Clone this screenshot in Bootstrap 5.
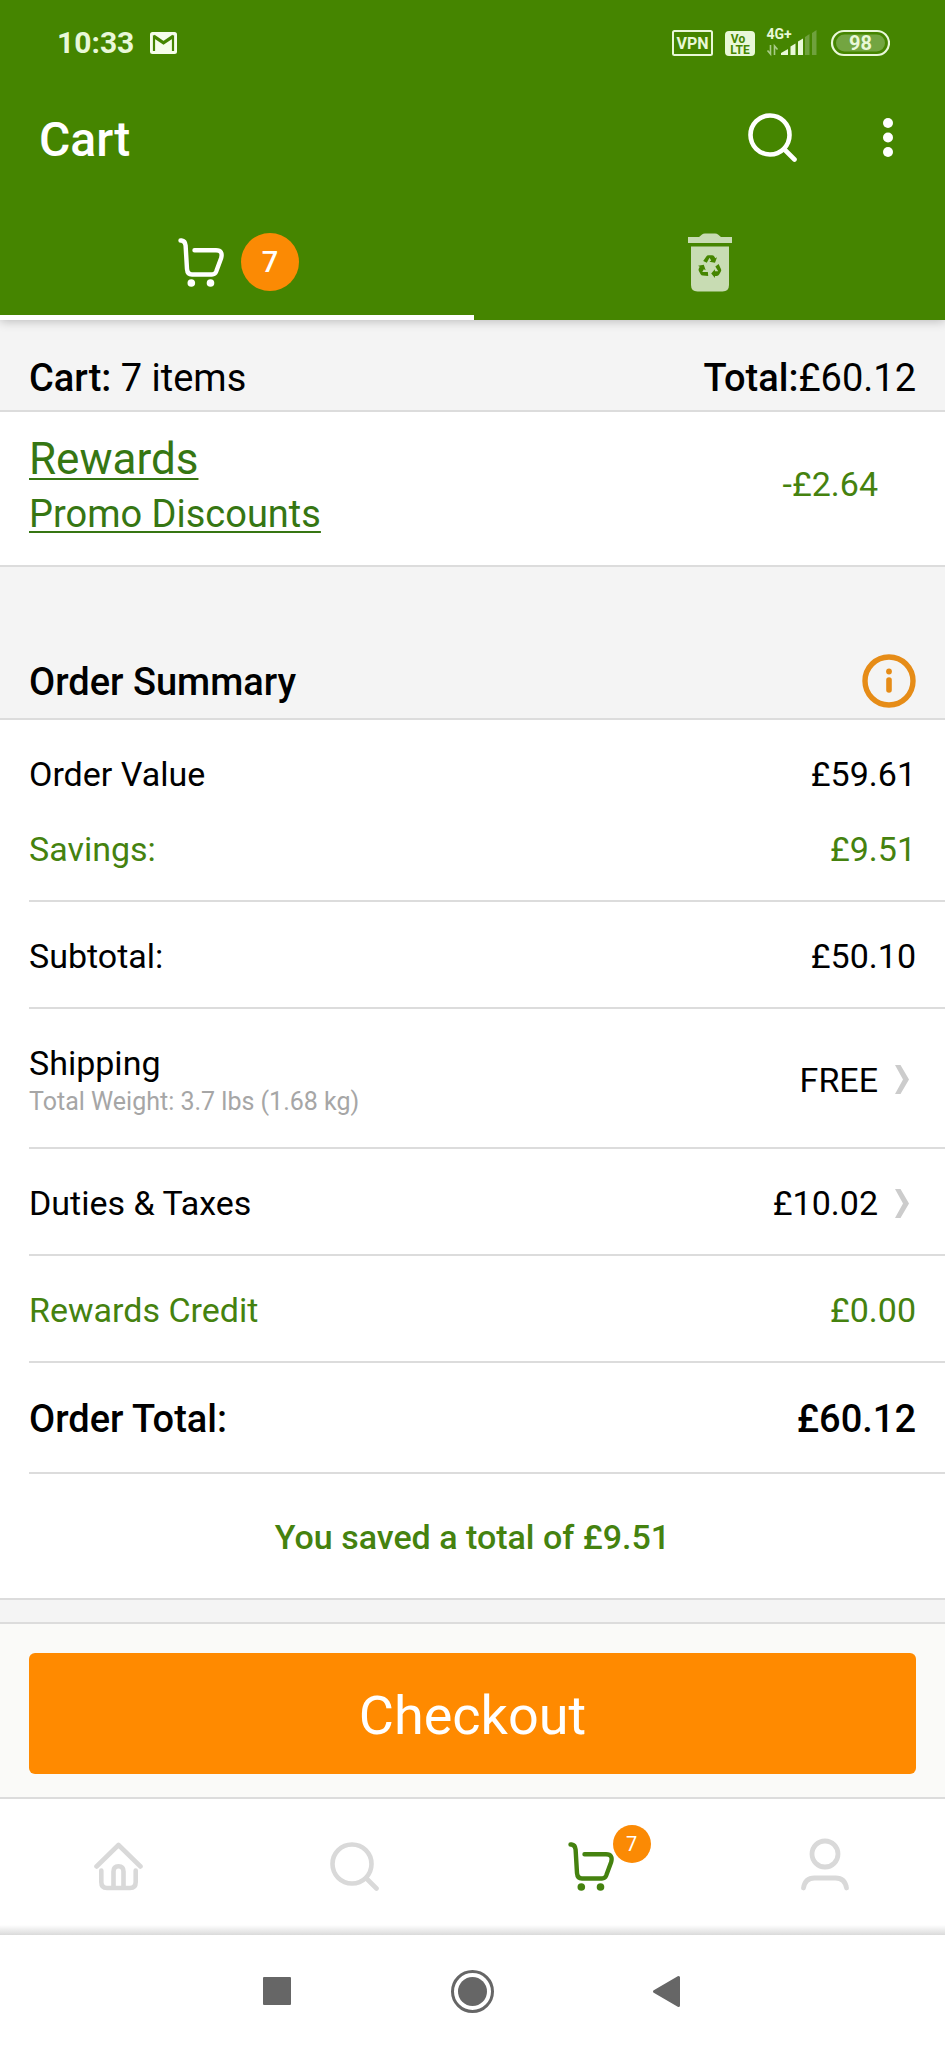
<!DOCTYPE html>
<html lang="en">
<head>
<meta charset="utf-8">
<meta name="viewport" content="width=device-width, initial-scale=1">
<title>Cart</title>
<link href="https://cdn.jsdelivr.net/npm/bootstrap@5.3.0/dist/css/bootstrap.min.css" rel="stylesheet">
<style>
  :root { --leaf: #458500; --leaf-text: #45820f; --leaf-link: #367613; --amber: #ff8a00; --band: #f4f4f4; --rule: #dcdcdc; --edge: 29px; }
  body { font-family: Roboto, "Liberation Sans", sans-serif; font-size: 34px; line-height: 44px; color: #000; background: #fff; }
  svg { display: block; flex: none; }
  button.bare { border: 0; background: none; padding: 0; color: inherit; }
  .edge-x { padding-left: var(--edge); padding-right: var(--edge); }
  .t-lg { font-size: 38px; }
  .t-mid { font-weight: 500; }
  .summary .t-green, .t-green { color: var(--leaf-text); }

  .app-head { background: var(--leaf); color: #fff; position: relative; box-shadow: 0 1px 10px rgba(0,0,0,.25); z-index: 1; }
  .status { height: 86px; padding: 0 55px 0 57px; color: #e9f8d8; font-size: 30px; line-height: 36px; }
  .title-bar { height: 102px; padding: 0 37px 0 39px; }
  .title-bar h1 { font-size: 48px; line-height: 56px; padding-top: 6px; }
  .title-bar .actions { gap: 71px; }
  .more { width: 40px; }
  .cart-tabs { height: 132px; }
  .cart-tabs a { color: #fff; border-bottom: 5px solid transparent; padding-top: 21px; }
  .cart-tabs a.active { border-color: #fff; padding-left: 3px; }
  .count { background: #fb8a04; color: #fff; border-radius: 50%; }
  .count-lg { width: 58px; height: 58px; font-size: 29px; font-weight: 500; margin-left: 17px; }
  .count-sm { width: 38px; height: 38px; font-size: 20px; left: 45px; top: -17px; }

  .band { background: var(--band); border-bottom: 2px solid var(--rule); }
  .band-cart { padding-top: 36px; padding-bottom: 10px; }
  .band-summary { padding-top: 87px; padding-bottom: 10px; }
  .band-summary h2 { padding-top: 4px; }
  .rewards { padding-top: 22px; padding-bottom: 26px; border-bottom: 2px solid var(--rule); }
  .rewards a { color: var(--leaf-link); line-height: 50px; text-underline-offset: 4px; text-decoration-thickness: 2px; }
  .rewards a.first { font-size: 44px; margin-bottom: 5px; }
  .rewards .amount { padding-right: 38px; padding-bottom: 6px; }

  .summary { margin-left: var(--edge); }
  .line-item { padding: 32px var(--edge) 29px 0; border-bottom: 2px solid var(--rule); color: #000; }
  .line-pair { gap: 31px; }
  .line-total { line-height: 48px; }
  .weight { font-size: 25px; line-height: 33px; color: #a6a6a6; }
  .chev { margin-left: 17px; margin-right: 7px; }
  .saved { padding: 41px 0 39px; border-bottom: 2px solid var(--rule); }
  .strip { height: 24px; }
  .pay { background: #fafaf8; padding-top: 29px; padding-bottom: 23px; border-bottom: 2px solid var(--rule); }
  .pay .btn { --bs-btn-bg: var(--amber); --bs-btn-color: #fff; --bs-btn-border-width: 0; --bs-btn-hover-bg: #f58400; --bs-btn-hover-color: #fff;
    height: 121px; font-size: 54px; line-height: 64px; border-radius: 6px; padding: 10px 0 6px; }
  .tab-bar { height: 136px; padding-bottom: 2px; background: linear-gradient(to top, #dadada, #fff 10px); color: #d9d9d9; }
  .tab-bar a { color: inherit; }
  .tab-bar a.active { color: var(--leaf-text); }
  .sys-bar { height: 113px; gap: 152px; color: #666; }
</style>
</head>
<body>
<svg class="d-none" aria-hidden="true">
  <symbol id="i-cart" viewBox="0 0 46 49">
    <path d="M2.500 2.500H3.500Q7.200 3 7.600 7.500L9 31Q9.400 36.500 14 36.500H34Q37 36.500 38.200 33.500L43 20.500Q45.500 12.300 38 12.200H16.500" fill="none" stroke="currentColor" stroke-width="4.400" stroke-linecap="round" stroke-linejoin="round"/>
    <circle cx="13.300" cy="45" r="3.800" fill="currentColor"/><circle cx="32.500" cy="45" r="3.800" fill="currentColor"/>
  </symbol>
  <symbol id="i-search" viewBox="0 0 49 49">
    <circle cx="22" cy="22" r="19.500" fill="none" stroke="currentColor" stroke-width="4.600"/>
    <path d="M36.500 36.500L46.500 46.500" stroke="currentColor" stroke-width="4.600" stroke-linecap="round"/>
  </symbol>
  <symbol id="i-chev" viewBox="0 0 14 29">
    <path d="M0 0H5.500L14 14.500L5.500 29H0L8 14.500Z" fill="#ccc"/>
  </symbol>
</svg>

<div class="d-flex flex-column min-vh-100">
  <header class="app-head">
    <div class="status d-flex align-items-center justify-content-between">
      <div class="d-flex align-items-center gap-3">
        <span class="fw-bold">10:33</span>
        <svg width="27" height="22" viewBox="0 0 27 22" aria-label="Mail">
          <rect width="27" height="22" rx="2.500" fill="#f6fdeb"/>
          <path d="M4 19V5L13.500 11.500L23 5V19" fill="none" stroke="#458500" stroke-width="2.200"/>
          <path d="M4 3.500L13.500 10L23 3.500" fill="none" stroke="#458500" stroke-width="2"/>
        </svg>
      </div>
      <svg width="218" height="46" viewBox="671 20 218 46" font-family="Roboto, sans-serif" font-weight="700">
        <rect x="672" y="31" width="39" height="24" rx="1.500" fill="none" stroke="#e9f8d8" stroke-width="2"/>
        <text x="691.500" y="48.500" font-size="16" text-anchor="middle" fill="#e9f8d8">VPN</text>
        <rect x="724" y="31" width="30" height="25" rx="4" fill="#e9f8d8"/>
        <text x="737" y="42.500" font-size="12" text-anchor="middle" fill="#458500">Vo</text>
        <text x="739" y="53.500" font-size="12" text-anchor="middle" fill="#458500">LTE</text>
        <text x="765.500" y="38.500" font-size="14" fill="#e9f8d8">4G+</text>
        <path d="M769.500 45V54L766.500 50.500M773.500 55V46L776.500 49.500" fill="none" stroke="#a9cc88" stroke-width="1.600"/>
        <path d="M780 55V53L787 49V55ZM789.500 55V46.500L794.500 43.500V55ZM797 55V41.500L802 38.500V55Z" fill="#e9f8d8"/>
        <path d="M804 55V37L808.500 34V55ZM811 55V33L815.500 30V55Z" fill="#6fa13d"/>
        <rect x="831" y="31" width="57" height="24" rx="12" fill="none" stroke="#e9f8d8" stroke-width="2.200"/>
        <rect x="835" y="34.500" width="49" height="17" rx="8.500" fill="#73a541"/>
        <text x="859.500" y="50" font-size="20" text-anchor="middle" fill="#e9f8d8">98</text>
      </svg>
    </div>
    <div class="title-bar d-flex align-items-center justify-content-between">
      <h1 class="t-mid m-0">Cart</h1>
      <div class="actions d-flex align-items-center">
        <button class="bare" type="button" aria-label="Search"><svg width="49" height="49"><use href="#i-search"/></svg></button>
        <button class="bare more d-flex justify-content-center" type="button" aria-label="More options">
          <svg width="10" height="39" viewBox="0 0 10 39" fill="#fff"><circle cx="5" cy="5" r="5"/><circle cx="5" cy="19.500" r="5"/><circle cx="5" cy="34" r="5"/></svg>
        </button>
      </div>
    </div>
    <nav class="cart-tabs row g-0" aria-label="Cart lists">
      <a class="col active d-flex align-items-center justify-content-center text-decoration-none" href="#cart" aria-label="Cart">
        <svg width="46" height="49"><use href="#i-cart"/></svg>
        <span class="count count-lg d-flex align-items-center justify-content-center">7</span>
      </a>
      <a class="col d-flex align-items-center justify-content-center" href="#removed" aria-label="Removed items">
        <svg width="44" height="59" viewBox="0 0 44 59">
          <path d="M0 4H11L14 1.500Q15 .5 17 .5H27Q29 .5 30 1.500L33 4H44V10H0ZM3 13.500H41V52Q41 58.500 34.500 58.500H9.500Q3 58.500 3 52Z" fill="#c8dcb3"/>
          <g fill="#458500"><path id="r-arm" d="M15.200 28L18.300 23.500Q19 22.300 20.500 22.300H24Q25.500 22.300 26.300 23.600L27.300 25.200L29 24.200L27 29.700L21.400 28.700L23.200 27.600L21.500 24.800L18.800 29.700Z"/>
          <use href="#r-arm" transform="rotate(120 22 34)"/><use href="#r-arm" transform="rotate(240 22 34)"/></g>
        </svg>
      </a>
    </nav>
  </header>

  <main id="cart">
    <section class="band band-cart edge-x t-lg d-flex justify-content-between">
      <div><span class="t-mid">Cart:</span> 7 items</div>
      <div><span class="t-mid">Total:</span>£60.12</div>
    </section>

    <section class="rewards edge-x d-flex align-items-center justify-content-between">
      <div class="d-flex flex-column align-items-start">
        <a class="first" href="#rewards">Rewards</a>
        <a class="t-lg" href="#promo">Promo Discounts</a>
      </div>
      <div class="amount t-green">-£2.64</div>
    </section>

    <section class="band band-summary edge-x d-flex align-items-center justify-content-between">
      <h2 class="t-lg t-mid m-0">Order Summary</h2>
      <button class="bare" type="button" aria-label="About the order summary">
        <svg width="54" height="54" viewBox="0 0 54 54"><circle cx="27" cy="27" r="24" fill="none" stroke="#e68c17" stroke-width="5.400"/><circle cx="27" cy="17.500" r="2.900" fill="#e68c17"/><path d="M27 26V36" stroke="#e68c17" stroke-width="5.600" stroke-linecap="round"/></svg>
      </button>
    </section>

    <ul class="summary list-unstyled mb-0">
      <li class="line-item line-pair d-flex flex-column">
        <div class="d-flex justify-content-between"><span>Order Value</span><span>£59.61</span></div>
        <div class="d-flex justify-content-between t-green"><span>Savings:</span><span>£9.51</span></div>
      </li>
      <li class="line-item d-flex justify-content-between"><span>Subtotal:</span><span>£50.10</span></li>
      <li>
        <a class="line-item d-flex align-items-center justify-content-between text-decoration-none" href="#shipping">
          <span class="d-flex flex-column"><span>Shipping</span><span class="weight">Total Weight: 3.7 lbs (1.68 kg)</span></span>
          <span class="d-flex align-items-center">FREE<svg class="chev" width="14" height="29"><use href="#i-chev"/></svg></span>
        </a>
      </li>
      <li>
        <a class="line-item d-flex align-items-center justify-content-between text-decoration-none" href="#duties">
          <span>Duties &amp; Taxes</span>
          <span class="d-flex align-items-center">£10.02<svg class="chev" width="14" height="29"><use href="#i-chev"/></svg></span>
        </a>
      </li>
      <li class="line-item t-green d-flex justify-content-between"><span>Rewards Credit</span><span>£0.00</span></li>
      <li class="line-item line-total t-lg t-mid d-flex justify-content-between"><span>Order Total:</span><span>£60.12</span></li>
    </ul>
    <p class="saved t-green t-mid text-center m-0">You saved a total of £9.51</p>
    <div class="band strip"></div>

    <section class="pay edge-x">
      <button class="btn w-100" type="button">Checkout</button>
    </section>
  </main>

  <nav class="tab-bar row g-0 align-items-center" aria-label="Main">
    <a class="col d-flex justify-content-center" href="#home" aria-label="Home">
      <svg width="49" height="49" viewBox="0 0 49 49" fill="none" stroke="currentColor" stroke-width="4.600" stroke-linecap="round" stroke-linejoin="round"><path d="M2.500 24.500L24.500 3L46.500 24.500M7.300 28.500V40Q7.300 46 13 46H36Q41.700 46 41.700 40V28.500M19.500 45V29.500Q19.500 24.300 24.500 24.300T29.500 29.500V45"/></svg>
    </a>
    <a class="col d-flex justify-content-center" href="#search" aria-label="Search"><svg width="49" height="49"><use href="#i-search"/></svg></a>
    <a class="col active d-flex justify-content-center text-decoration-none" href="#cart" aria-label="Cart">
      <span class="position-relative"><svg width="46" height="49"><use href="#i-cart"/></svg>
        <span class="count count-sm position-absolute d-flex align-items-center justify-content-center">7</span></span>
    </a>
    <a class="col d-flex justify-content-center" href="#account" aria-label="Account">
      <svg width="52" height="57" viewBox="0 0 52 57" fill="none" stroke="currentColor" stroke-width="4.800" stroke-linecap="round"><circle cx="24" cy="16" r="13"/><path d="M2.500 50Q4 40 13.500 40H34.500Q44 40 45.500 50"/></svg>
    </a>
  </nav>
  <div class="sys-bar d-flex align-items-center justify-content-center">
    <button class="bare" type="button" aria-label="Recent apps"><svg width="43" height="43" viewBox="0 0 43 43"><rect x="7" y="7" width="28" height="28" rx="1" fill="currentColor"/></svg></button>
    <button class="bare" type="button" aria-label="Home screen"><svg width="43" height="43" viewBox="0 0 43 43"><circle cx="21.500" cy="21.500" r="20" fill="none" stroke="currentColor" stroke-width="3"/><circle cx="21.500" cy="21.500" r="14.500" fill="currentColor"/></svg></button>
    <button class="bare" type="button" aria-label="Back"><svg width="43" height="43" viewBox="0 0 43 43"><path d="M32.500 7.500V35.500L8.500 21.500Z" fill="currentColor" stroke="currentColor" stroke-width="3" stroke-linejoin="round"/></svg></button>
  </div>
</div>
<script src="https://cdn.jsdelivr.net/npm/bootstrap@5.3.0/dist/js/bootstrap.bundle.min.js"></script>
</body>
</html>
